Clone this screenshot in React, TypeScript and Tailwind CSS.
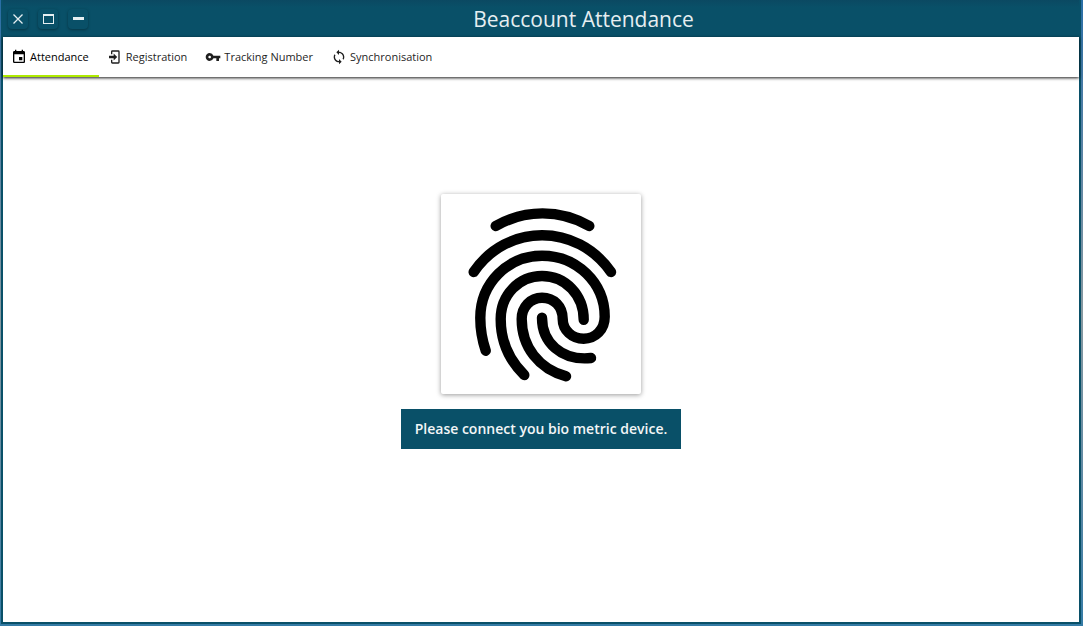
import { useState } from "react";
import type { ReactNode } from "react";
import { MdEvent, MdLoop, MdVpnKey } from "react-icons/md";

function LoginIcon() {
  return (
    <svg viewBox="0 0 24 24" className="size-4" fill="currentColor" aria-hidden="true">
      <path d="M10,17.25V14H3V10H10V6.75L15.25,12L10,17.25M8,2H17A2,2 0 0,1 19,4V20A2,2 0 0,1 17,22H8A2,2 0 0,1 6,20V16H8V20H17V4H8V8H6V4A2,2 0 0,1 8,2Z" />
    </svg>
  );
}

function Fingerprint() {
  return (
    <svg
      viewBox="0 0 200 200"
      className="size-full"
      fill="none"
      stroke="black"
      strokeWidth="10.4"
      strokeLinecap="round"
      strokeLinejoin="round"
      role="img"
      aria-label="Fingerprint"
    >
      <path d="M54.7 32C84 15.200 119 15.200 148.300 32" />
      <path d="M32.700 78C66 29 136 29 170 78" />
      <path d="M44.700 156.700C40.500 144 39.300 136 39.300 124C39.300 89 67 61.700 101 61.700C136 61.700 163.700 89 163.700 122.700C163.700 135.500 154.500 144.700 142.700 144.700C131 144.700 121.700 136 121.700 125C121.700 112.500 113 103.700 101 103.700C89.500 103.700 80.700 113 80.700 125C80.700 153 98 175 125 182.300" />
      <path d="M83.300 181C68 166 59.700 147 59.700 125C59.700 101 78 82 101 82C124.500 82 142.700 101 142.700 125.700" />
      <path d="M101 123.700C101 148 120 167 150 164" />
    </svg>
  );
}

function WindowButton({ label, children }: { label: string; children: ReactNode }) {
  return (
    <button
      type="button"
      aria-label={label}
      className="flex size-5 items-center justify-center rounded-sm bg-[#095068] text-[#e6eef1] shadow-[0_1px_3px_rgba(0,0,0,0.35)]"
    >
      {children}
    </button>
  );
}

const tabs = [
  { name: "Attendance", icon: <MdEvent className="size-4" /> },
  { name: "Registration", icon: <LoginIcon /> },
  { name: "Tracking Number", icon: <MdVpnKey className="size-4" /> },
  { name: "Synchronisation", icon: <MdLoop className="size-4" /> },
];

export default function App() {
  const [active, setActive] = useState("Attendance");

  return (
    <div className="flex min-h-screen flex-col bg-linear-to-b from-[#286ea5] via-[#8799a0] to-[#347ba5] pr-0.5 pb-0.5 pl-px font-['Open_Sans','Noto_Sans',sans-serif]">
      <div className="flex flex-1 flex-col border-2 border-t-0 border-[#095068] bg-white">
        <header className="flex h-[37px] shrink-0 items-center bg-linear-to-b from-[#0b4962] to-[#095068] to-20% pl-[5px]">
          <div className="flex gap-2.5">
            <WindowButton label="Close">
              <svg viewBox="0 0 12 12" className="size-3" stroke="currentColor" strokeWidth="1.3" aria-hidden="true">
                <path d="M1.500 1.500L10.500 10.500M10.500 1.500L1.500 10.500" />
              </svg>
            </WindowButton>
            <WindowButton label="Maximise">
              <svg viewBox="0 0 12 12" className="size-3" fill="currentColor" aria-hidden="true">
                <path fillRule="evenodd" d="M1 1H12V11H1ZM2 3V10H11V3Z" />
              </svg>
            </WindowButton>
            <WindowButton label="Minimise">
              <svg viewBox="0 0 12 12" className="size-3" fill="currentColor" aria-hidden="true">
                <path d="M1 4H12V7H1Z" />
              </svg>
            </WindowButton>
          </div>
          <h1 className="flex-1 text-center text-[21px] leading-9 text-[#e6eef1]">Beaccount Attendance</h1>
        </header>
        <nav className="flex h-10 shrink-0 shadow-[0_1px_3px_rgba(0,0,0,0.9)]">
          {tabs.map((tab) => (
            <button
              key={tab.name}
              type="button"
              aria-current={active === tab.name ? "page" : undefined}
              onClick={() => setActive(tab.name)}
              className={
                active === tab.name
                  ? "flex items-center gap-[3px] pr-2.5 pl-2 text-[11px] text-black shadow-[inset_0_-2px_0_#aeea00]"
                  : "flex items-center gap-[3px] pr-2.5 pl-2 text-[11px] text-[#1f1f1f]"
              }
            >
              {tab.icon}
              {tab.name}
            </button>
          ))}
        </nav>
        <main className="flex flex-1 flex-col items-center justify-center gap-[15px] pb-14">
          <div className="size-50 rounded-xs bg-white shadow-[0_1px_5px_rgba(0,0,0,0.4)]">
            <Fingerprint />
          </div>
          <button type="button" className="h-10 bg-[#095068] px-3.5 text-sm font-semibold text-[#f2f6f7]">
            Please connect you bio metric device.
          </button>
        </main>
      </div>
    </div>
  );
}
